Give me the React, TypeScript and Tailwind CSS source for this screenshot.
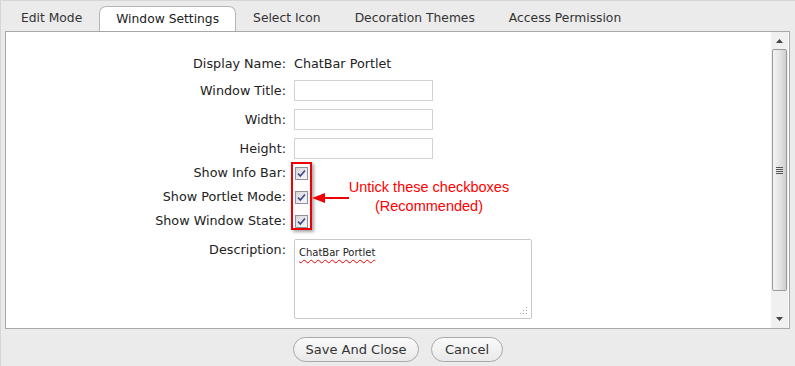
import React from 'react'

const tabs = ['Edit Mode', 'Window Settings', 'Select Icon', 'Decoration Themes', 'Access Permission']

function TextInput() {
  return <div className="h-[21px] w-[139px] border border-[#cfd3d8] bg-white" />
}

function Checkbox() {
  return (
    <div className="h-[13px] w-[13px] border border-[#8f8f9d] bg-gradient-to-br from-[#d8d8dc] to-[#f8f8f8] flex items-center justify-center">
      <svg width="11" height="11" viewBox="0 0 11 11">
        <path d="M2 5.5 L4.3 8 L9 2.5" fill="none" stroke="#3b4a8c" strokeWidth="1.7" />
      </svg>
    </div>
  )
}

function Row({ label, children, h, top = false }: { label: string; children: React.ReactNode; h: string; top?: boolean }) {
  return (
    <div className={`flex ${h} ${top ? 'items-start' : 'items-center'}`}>
      <div className={`w-[288px] pr-[8px] text-right ${top ? 'pt-[1px]' : ''}`}>{label}</div>
      {children}
    </div>
  )
}

export default function App() {
  return (
    <div
      className="w-[795px] h-[366px] bg-[#ebebeb] border-l border-t border-[#d6d6d6] text-[12.75px] text-[#222]"
      style={{ fontFamily: '"DejaVu Sans", Verdana, sans-serif' }}
    >
      <div className="flex pl-[3px] pt-[5px] h-[30px] text-[12.3px]">
        {tabs.map((t, i) => (
          <div
            key={t}
            className={
              i === 1
                ? 'relative z-10 h-[25px] px-[16px] border border-b-0 border-[#b5b5b5] rounded-t-[7px] bg-white flex items-center'
                : 'h-[25px] px-[16px] border border-transparent flex items-center text-[#333]'
            }
          >
            {t}
          </div>
        ))}
      </div>

      <div className="relative ml-[4px] w-[785px] h-[298px] border border-[#a8a8a8] bg-white flex">
        <div className="relative flex-1 pt-[21px]">
          <Row label="Display Name:" h="h-[22px]">
            <span>ChatBar Portlet</span>
          </Row>
          <div className="h-[5px]" />
          <Row label="Window Title:" h="h-[21px]">
            <TextInput />
          </Row>
          <div className="h-[8px]" />
          <Row label="Width:" h="h-[21px]">
            <TextInput />
          </Row>
          <div className="h-[8px]" />
          <Row label="Height:" h="h-[21px]">
            <TextInput />
          </Row>
          <div className="h-[2px]" />
          <Row label="Show Info Bar:" h="h-[24px]">
            <div className="pl-[1px]"><Checkbox /></div>
          </Row>
          <Row label="Show Portlet Mode:" h="h-[24px]">
            <div className="pl-[1px]"><Checkbox /></div>
          </Row>
          <Row label="Show Window State:" h="h-[24px]">
            <div className="pl-[1px]"><Checkbox /></div>
          </Row>
          <div className="h-[6px]" />
          <Row label="Description:" h="h-[80px]" top>
            <div className="relative h-[80px] w-[238px] border border-[#c9c9c9] rounded-[2px] bg-white px-[4px] pt-[5px] text-[10px]">
              <span className="underline decoration-wavy decoration-[#e00] underline-offset-[3px]">ChatBar Portlet</span>
              <svg className="absolute right-[3px] bottom-[3px]" width="8" height="8" viewBox="0 0 8 8">
                <g fill="#aaa">
                  <rect x="6" y="0" width="1" height="1" />
                  <rect x="3" y="3" width="1" height="1" />
                  <rect x="6" y="3" width="1" height="1" />
                  <rect x="0" y="6" width="1" height="1" />
                  <rect x="3" y="6" width="1" height="1" />
                  <rect x="6" y="6" width="1" height="1" />
                </g>
              </svg>
            </div>
          </Row>

          {/* annotation overlay */}
          <div className="absolute left-[285px] top-[130px] w-[21px] h-[68px] border-2 border-[#e00] shadow-[2px_2px_3px_rgba(0,0,0,0.35)]" />
          <svg className="absolute left-[305px] top-[160px]" width="40" height="12" viewBox="0 0 40 12">
            <path d="M14 6 H38" stroke="#e00" strokeWidth="2" />
            <path d="M1 6 L14 1 L14 11 Z" fill="#e00" />
          </svg>
          <div
            className="absolute left-[338px] top-[146px] w-[170px] text-center text-[14.5px] leading-[19px] text-[#f00]"
            style={{ fontFamily: '"Liberation Sans", Arial, sans-serif' }}
          >
            Untick these checkboxes
            <br />
            (Recommended)
          </div>
        </div>

        <div className="w-[17px] mr-[1px] flex flex-col bg-[#f0f0f0]">
          <div className="h-[17px] flex items-center justify-center">
            <svg width="7" height="4" viewBox="0 0 7 4"><path d="M0 4 L3.5 0 L7 4 Z" fill="#444" /></svg>
          </div>
          <div className="mx-[1px] h-[242px] border border-[#9a9a9a] rounded-[2px] bg-gradient-to-r from-[#f4f4f4] via-[#e4e4e4] to-[#cfcfcf] flex items-center justify-center">
            <div className="flex flex-col gap-[1px]">
              <div className="w-[7px] h-[1px] bg-[#555]" />
              <div className="w-[7px] h-[1px] bg-[#555]" />
              <div className="w-[7px] h-[1px] bg-[#555]" />
              <div className="w-[7px] h-[1px] bg-[#555]" />
            </div>
          </div>
          <div className="flex-1 flex items-end justify-center pb-[7px]">
            <svg width="7" height="4" viewBox="0 0 7 4"><path d="M0 0 L3.5 4 L7 0 Z" fill="#444" /></svg>
          </div>
        </div>
      </div>

      <div className="flex justify-center gap-[12px] pt-[8px]">
        <button className="h-[25px] w-[126px] rounded-full border border-[#a9a9a9] bg-gradient-to-b from-[#fafafa] to-[#e9e9e9] text-[13px] text-[#333]">
          Save And Close
        </button>
        <button className="h-[25px] w-[72px] rounded-full border border-[#a9a9a9] bg-gradient-to-b from-[#fafafa] to-[#e9e9e9] text-[13px] text-[#333]">
          Cancel
        </button>
      </div>
    </div>
  )
}
